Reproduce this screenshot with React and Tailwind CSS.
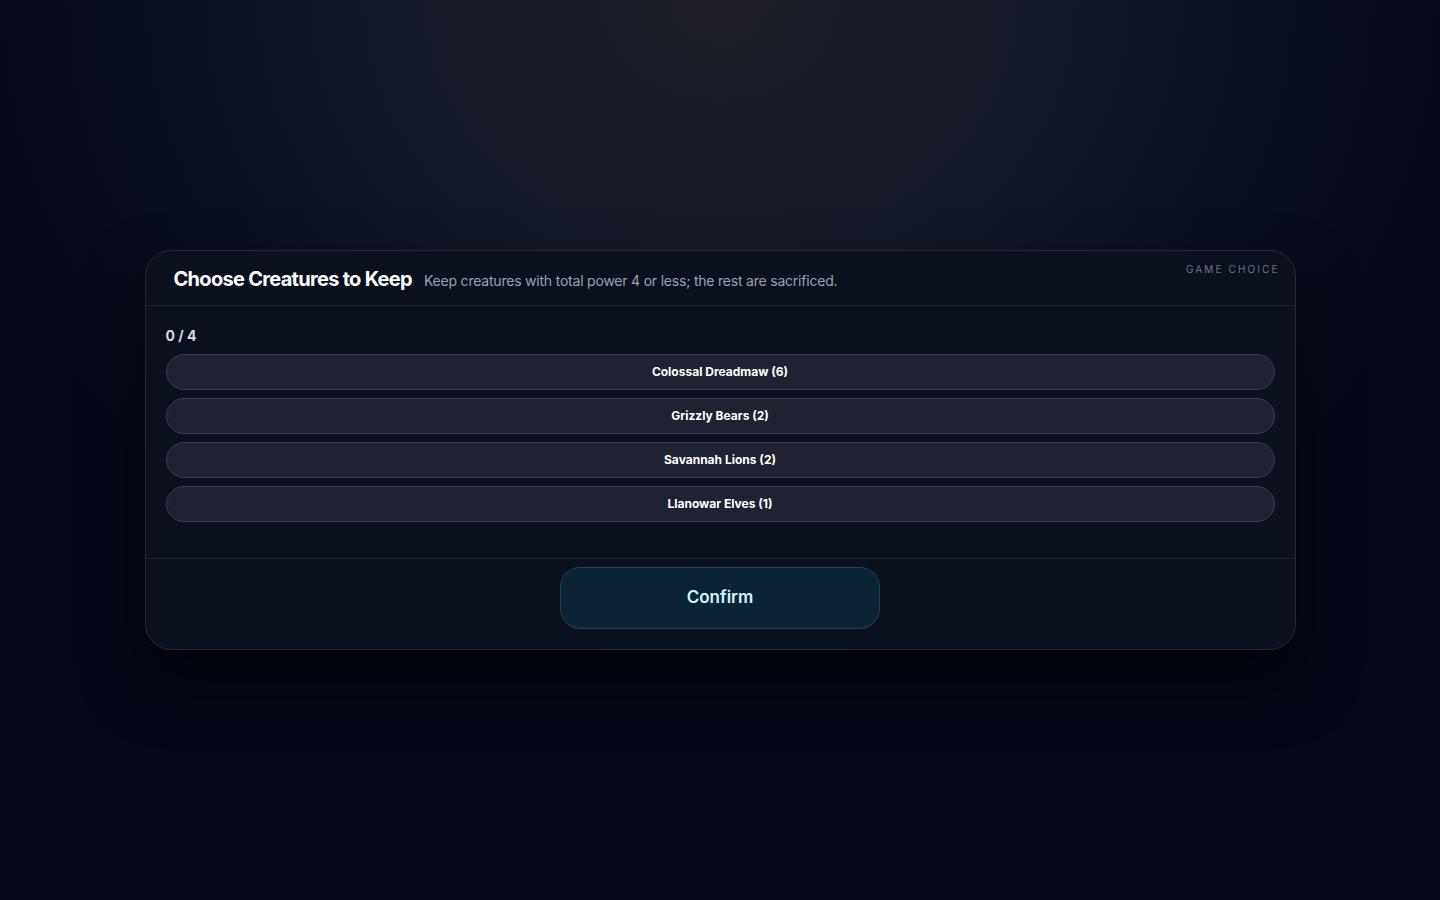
import { useState } from 'react';

// ── Data ──────────────────────────────────────────────────────────────────────
const CREATURES = [
  { id: 'dreadmaw', name: 'Colossal Dreadmaw', power: 6 },
  { id: 'bears', name: 'Grizzly Bears', power: 2 },
  { id: 'lions', name: 'Savannah Lions', power: 2 },
  { id: 'elves', name: 'Llanowar Elves', power: 1 },
];

const MAX_POWER = 4;

// ── Sub-components ────────────────────────────────────────────────────────────
function CreatureOption({ creature, selected, onToggle }) {
  return (
    <button
      type="button"
      onClick={onToggle}
      className={`h-9 w-full rounded-full border text-[12px] font-bold transition-colors ${
        selected
          ? 'border-cyan-700 bg-[#0d2636] text-cyan-100'
          : 'border-[#3a3d4b] bg-[#1f2331] text-white hover:bg-[#252a39]'
      }`}
    >
      {creature.name} ({creature.power})
    </button>
  );
}

// ── Main ──────────────────────────────────────────────────────────────────────
export default function App() {
  const [picked, setPicked] = useState([]);

  const total = CREATURES.filter((c) => picked.includes(c.id)).reduce(
    (sum, c) => sum + c.power,
    0
  );

  function toggle(id) {
    setPicked((prev) =>
      prev.includes(id) ? prev.filter((p) => p !== id) : [...prev, id]
    );
  }

  return (
    <div className="relative min-h-screen w-full overflow-hidden bg-[#040714] font-['Inter','Liberation_Sans',sans-serif]">
      {/* soft light from the top */}
      <div className="pointer-events-none absolute inset-0 bg-[radial-gradient(ellipse_55%_75%_at_50%_0%,#1f2029_0%,#131826_40%,#0a0f1e_70%,#040816_100%)]" />

      <div className="relative flex min-h-screen flex-col items-center pt-[250px]">
        <div className="relative w-[1151px] rounded-[26px] border border-[#262a36] bg-[#0b101d] shadow-[0_30px_60px_rgba(0,0,0,0.55)]">
          <span className="absolute right-[15px] top-[11px] text-[10px] tracking-[0.21em] text-[#6b7486]">
            GAME CHOICE
          </span>

          {/* Header */}
          <div className="flex h-[55px] items-center gap-3 border-b border-[#1f2431] pl-7 pr-6 pt-[2px]">
            <h2 className="text-[20px] font-bold leading-7 tracking-[-0.035em] text-white">
              Choose Creatures to Keep
            </h2>
            <p className="pt-[3px] text-[14px] leading-5 tracking-[-0.015em] text-[#98a2b6]">
              Keep creatures with total power {MAX_POWER} or less; the rest are sacrificed.
            </p>
          </div>

          {/* Options */}
          <div className="flex flex-col gap-2 border-b border-[#1f2431] px-5 pt-5 pb-9">
            <div className="text-[14px] font-bold leading-5 text-[#d5dae3]">
              {total} / {MAX_POWER}
            </div>
            {CREATURES.map((c) => (
              <CreatureOption
                key={c.id}
                creature={c}
                selected={picked.includes(c.id)}
                onToggle={() => toggle(c.id)}
              />
            ))}
          </div>

          {/* Footer */}
          <div className="flex justify-center pt-2 pb-5">
            <button
              type="button"
              disabled={total > MAX_POWER}
              className="h-[62px] w-[320px] rounded-[20px] border border-[#1b4656] bg-[#0c2435] text-[17px] font-semibold text-[#cff8fc] disabled:opacity-60"
            >
              Confirm
            </button>
          </div>
        </div>
      </div>
    </div>
  );
}
